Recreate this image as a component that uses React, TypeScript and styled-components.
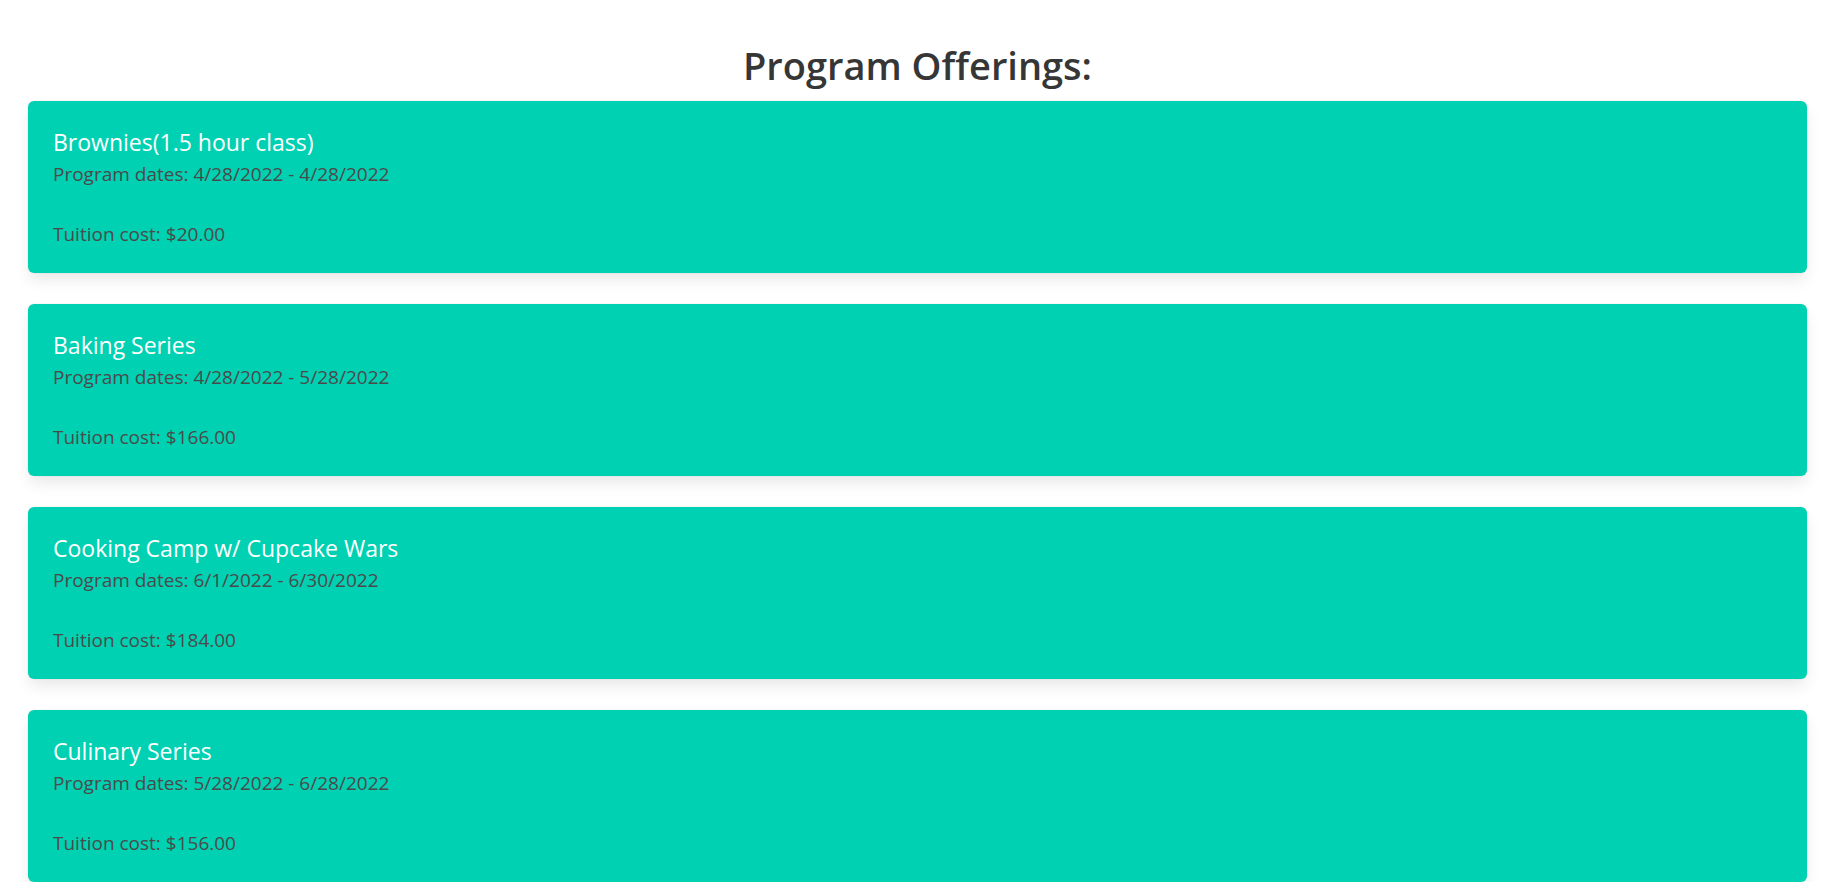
import React from "react";
import styled, { createGlobalStyle } from "styled-components";

const GlobalStyle = createGlobalStyle`
  html, body {
    margin: 0;
    padding: 0;
    background: #ffffff;
    font-family: "Open Sans", "Noto Sans", sans-serif;
  }
`;

const Page = styled.main`
  padding: 41px 27px 40px 28px;
`;

const Heading = styled.h1`
  margin: 0 0 12px;
  text-align: center;
  font-size: 38px;
  line-height: 48px;
  font-weight: 600;
  color: #363636;
`;

const CardList = styled.div`
  display: flex;
  flex-direction: column;
  gap: 31px;
`;

const Card = styled.section`
  height: 172px;
  box-sizing: border-box;
  background: #00d1b2;
  border-radius: 6px;
  padding: 26px 25px;
  box-shadow: 0 8px 16px -2px rgba(10, 10, 10, 0.1),
    0 0 0 1px rgba(10, 10, 10, 0.02);
  display: flex;
  flex-direction: column;
`;

const CardTitle = styled.h2`
  margin: 0;
  font-size: 23px;
  line-height: 30px;
  font-weight: 400;
  color: #ffffff;
`;

const CardLine = styled.p<{ $gapBefore: number }>`
  margin: ${(p) => p.$gapBefore}px 0 0;
  font-size: 19px;
  line-height: 26px;
  color: #4a4a4a;
`;

type Program = { name: string; dates: string; cost: string };

const programs: Program[] = [
  { name: "Brownies(1.5 hour class)", dates: "4/28/2022 - 4/28/2022", cost: "$20.00" },
  { name: "Baking Series", dates: "4/28/2022 - 5/28/2022", cost: "$166.00" },
  { name: "Cooking Camp w/ Cupcake Wars", dates: "6/1/2022 - 6/30/2022", cost: "$184.00" },
  { name: "Culinary Series", dates: "5/28/2022 - 6/28/2022", cost: "$156.00" },
];

export default function App() {
  return (
    <>
      <GlobalStyle />
      <Page>
        <Heading>Program Offerings:</Heading>
        <CardList>
          {programs.map((p) => (
            <Card key={p.name}>
              <CardTitle>{p.name}</CardTitle>
              <CardLine $gapBefore={4}>Program dates: {p.dates}</CardLine>
              <CardLine $gapBefore={34}>Tuition cost: {p.cost}</CardLine>
            </Card>
          ))}
        </CardList>
      </Page>
    </>
  );
}
